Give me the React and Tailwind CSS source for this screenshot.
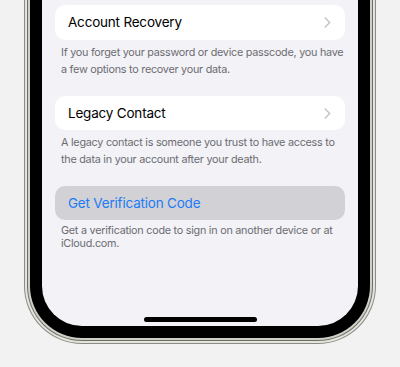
import React from "react";

function Chevron() {
  return (
    <svg width="7" height="11" viewBox="0 0 7 11" fill="none" className="shrink-0">
      <path d="M1.2 1l4.5 4.5-4.5 4.5" stroke="#c4c4c8" strokeWidth="1.5" strokeLinecap="round" strokeLinejoin="round" />
    </svg>
  );
}

function Row({ label, height = "h-[35px]" }) {
  return (
    <div className={`${height} bg-white rounded-[10px] flex items-center justify-between pl-[13px] pr-[14px]`}>
      <span className="text-[13.5px] tracking-[-0.2px] text-black">{label}</span>
      <Chevron />
    </div>
  );
}

function Note({ children, leading = "leading-[17px]" }) {
  return (
    <p className={`mt-[4px] pl-[6px] mr-[-6px] text-[10.8px] tracking-[-0.25px] ${leading} text-[#6c6c71]`}>
      {children}
    </p>
  );
}

export default function App() {
  return (
    <div
      className="w-[400px] h-[367px] bg-[#f2f2f2] overflow-hidden"
      style={{ fontFamily: "Inter, 'Noto Sans', sans-serif" }}
    >
      {/* phone frame */}
      <div className="ml-[24px] mt-[-60px] w-[352px] rounded-b-[58px] bg-[#8c8c86] p-[1px]">
        <div className="rounded-b-[57px] bg-[#e4e4de] p-[2px]">
          <div className="rounded-b-[55px] bg-[#707069] p-[1px]">
            <div className="rounded-b-[54px] bg-[#cfcfc8] p-[2px]">
              <div className="rounded-b-[52px] bg-black p-[12px]">
                {/* screen */}
                <div className="h-[368px] rounded-b-[40px] bg-[#f2f2f7] flex flex-col px-[13px] pt-[47px] pb-[4px]">
                  <Row label="Account Recovery" />
                  <Note>
                    If you forget your password or device passcode, you have a few options to recover your data.
                  </Note>

                  <div className="mt-[18px]">
                    <Row label="Legacy Contact" height="h-[34px]" />
                  </div>
                  <Note>
                    A legacy contact is someone you trust to have access to the data in your account after your death.
                  </Note>

                  <div className="mt-[18px] h-[34px] bg-[#d1d1d6] rounded-[10px] flex items-center pl-[13px]">
                    <span className="text-[13.5px] tracking-[-0.2px] text-[#1f7bf3]">Get Verification Code</span>
                  </div>
                  <Note leading="leading-[13px]">
                    Get a verification code to sign in on another device or at iCloud.com.
                  </Note>

                  <div className="mt-auto mx-auto w-[113px] h-[5px] rounded-full bg-black" />
                </div>
              </div>
            </div>
          </div>
        </div>
      </div>
    </div>
  );
}
